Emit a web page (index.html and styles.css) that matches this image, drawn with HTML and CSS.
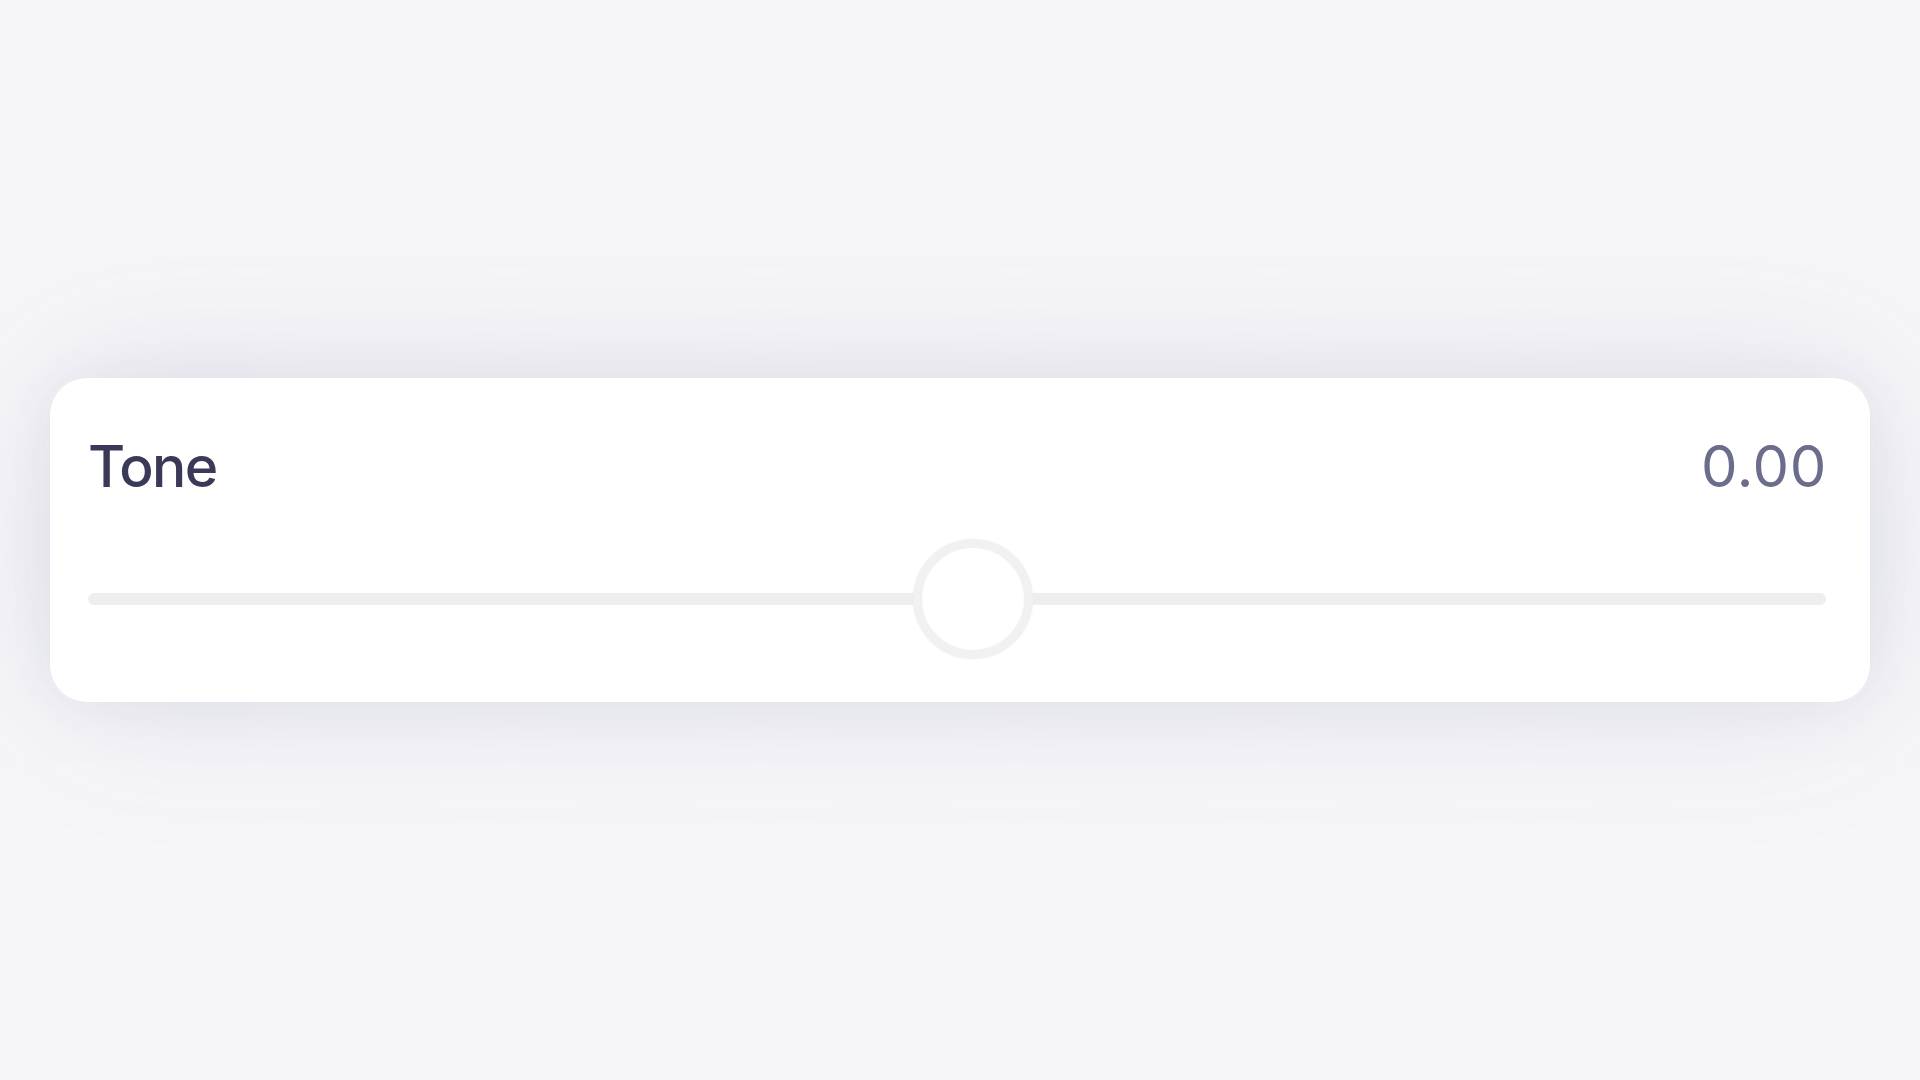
FILE: index.html
```html
<!DOCTYPE html>
<html lang="en">
<head>
<meta charset="utf-8">
<title>Tone</title>
<link rel="stylesheet" href="styles.css">
</head>
<body>
<main class="stage">
  <section class="card">
    <div class="head">
      <span class="label">Tone</span>
      <span class="value">0.00</span>
    </div>
    <div class="slider">
      <div class="track"></div>
      <div class="thumb" style="left: 50.9%"></div>
    </div>
  </section>
</main>
</body>
</html>
```
FILE: styles.css
```css
html, body {
  margin: 0;
  padding: 0;
  height: 100%;
}
body {
  background: #f6f6fa;
  font-family: Inter, "Noto Sans", "Liberation Sans", sans-serif;
}
.stage {
  height: 100vh;
  display: flex;
  align-items: center;
  padding: 0 50px;
  box-sizing: border-box;
}
.card {
  flex: 1;
  height: 324px;
  box-sizing: border-box;
  background: #ffffff;
  border-radius: 37px;
  padding: 59px 44px 43px 38px;
  box-shadow: 0 0 160px rgba(60, 60, 100, 0.13), 0 0 50px rgba(60, 60, 100, 0.05);
  display: flex;
  flex-direction: column;
  gap: 44px;
}
.head {
  display: flex;
  justify-content: space-between;
  align-items: baseline;
  font-size: 57px;
  line-height: 58px;
  height: 58px;
  font-weight: 500;
}
.label {
  color: #3a3a58;
  letter-spacing: -1.6px;
}
.value {
  color: #6c6c8c;
  font-weight: 400;
  font-size: 58px;
  letter-spacing: 0.6px;
  margin-right: -1px;
}
.slider {
  position: relative;
  height: 120px;
  display: flex;
  align-items: center;
}
.track {
  flex: 1;
  height: 12px;
  border-radius: 6px;
  background: #eeeeee;
}
.thumb {
  position: absolute;
  top: 0;
  width: 120px;
  height: 120px;
  box-sizing: border-box;
  margin-left: -60px;
  border-radius: 50%;
  background: #ffffff;
  border: 9px solid #f1f1f1;
  box-shadow: 0 0 3px rgba(0, 0, 0, 0.04), inset 0 0 2px rgba(0, 0, 0, 0.03);
}
```
